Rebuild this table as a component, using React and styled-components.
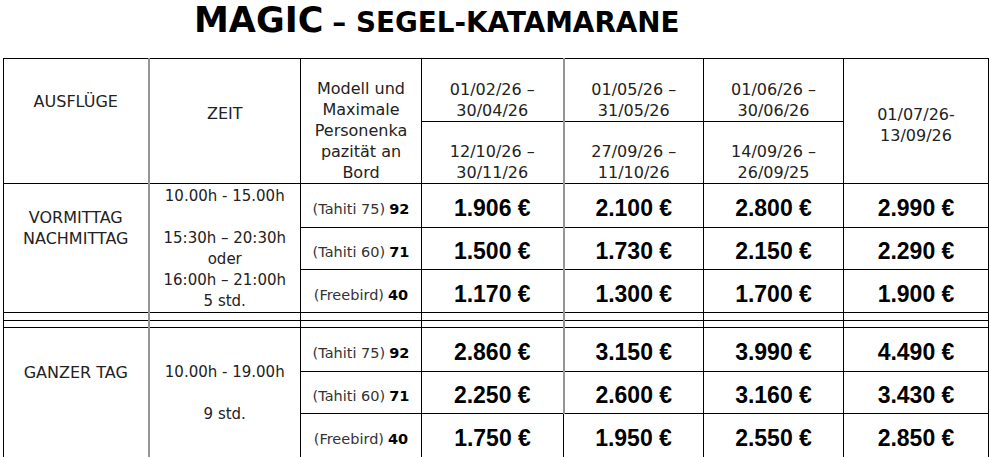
import React from "react";
import styled, { createGlobalStyle } from "styled-components";

const GlobalStyle = createGlobalStyle`
  html, body { margin: 0; padding: 0; overflow: hidden; background: #fff; }
  body { font-family: "DejaVu Sans", "Noto Sans", sans-serif; color: #222; }
`;

const Page = styled.div`
  padding-left: 3px;
`;

const Title = styled.h1`
  margin: 0;
  height: 58px;
  box-sizing: border-box;
  padding: 3px 0 0 191px;
  display: flex;
  align-items: baseline;
  gap: 9px;
  font-family: "DejaVu Sans", sans-serif;
  font-weight: bold;
  line-height: 35px;
  color: #000;
`;

const TitleBig = styled.span`
  font-size: 35px;
`;

const TitleSmall = styled.span`
  font-size: 27.8px;
`;

const Table = styled.table`
  border-collapse: collapse;
  table-layout: fixed;
  width: 986px;
`;

const Col = styled.col`
  width: ${(p) => p.$w}px;
`;

const GRAY = "2px solid #959595";

const Cell = styled.td`
  border: 1px solid #000;
  ${(p) => (p.$grayRight ? `border-right: ${GRAY};` : "")}
  ${(p) => (p.$grayLeft ? `border-left: ${GRAY};` : "")}
  padding: ${(p) => p.$pt || 0}px 0 0 0;
  height: ${(p) => p.$h}px;
  text-align: center;
  vertical-align: ${(p) => p.$va || "middle"};
  line-height: 21px;
  white-space: nowrap;
  box-sizing: border-box;
`;

const HeadText = styled.div`
  font-size: 16px;
  color: #222;
`;

const LabelText = styled.div`
  font-size: 16px;
  color: #222;
`;

const TimeText = styled.div`
  font-size: 15px;
  color: #222;
`;

const ModelName = styled.span`
  font-size: 14.5px;
  color: #333;
`;

const ModelPax = styled.span`
  font-size: 14.5px;
  font-weight: bold;
  color: #000;
  margin-left: 4px;
`;

const Price = styled.div`
  font-family: "Liberation Sans", Arial, sans-serif;
  font-weight: bold;
  font-size: 23px;
  color: #000;
  line-height: 24px;
`;

const widths = [145, 152, 121, 142, 140, 140, 145];

const blocks = [
  {
    label: ["VORMITTAG", "NACHMITTAG"],
    labelPt: 23,
    times: ["10.00h - 15.00h", "", "15:30h – 20:30h", "oder", "16:00h – 21:00h", "5 std."],
    timePt: 2,
    rows: [
      { model: "(Tahiti 75)", pax: "92", prices: ["1.906 €", "2.100 €", "2.800 €", "2.990 €"], h: 44 },
      { model: "(Tahiti 60)", pax: "71", prices: ["1.500 €", "1.730 €", "2.150 €", "2.290 €"], h: 42 },
      { model: "(Freebird)", pax: "40", prices: ["1.170 €", "1.300 €", "1.700 €", "1.900 €"], h: 43 },
    ],
  },
  {
    label: ["GANZER TAG"],
    labelPt: 34,
    times: ["10.00h - 19.00h", "", "9 std."],
    timePt: 34,
    rows: [
      { model: "(Tahiti 75)", pax: "92", prices: ["2.860 €", "3.150 €", "3.990 €", "4.490 €"], h: 44 },
      { model: "(Tahiti 60)", pax: "71", prices: ["2.250 €", "2.600 €", "3.160 €", "3.430 €"], h: 42 },
      { model: "(Freebird)", pax: "40", prices: ["1.750 €", "1.950 €", "2.550 €", "2.850 €"], h: 44, last: true },
    ],
  },
];

const lines = (arr) =>
  arr.map((t, i) => (
    <React.Fragment key={i}>
      {i > 0 && <br />}
      {t || "\u00a0"}
    </React.Fragment>
  ));

function Block({ block }) {
  return block.rows.map((r, i) => (
    <tr key={i}>
      {i === 0 && (
        <>
          <Cell rowSpan={3} $va="top" $pt={block.labelPt} $grayRight>
            <LabelText>{lines(block.label)}</LabelText>
          </Cell>
          <Cell rowSpan={3} $va="top" $pt={block.timePt} $grayLeft>
            <TimeText>{lines(block.times)}</TimeText>
          </Cell>
        </>
      )}
      <Cell $h={r.h} $pt={7}>
        <ModelName>{r.model}</ModelName>
        <ModelPax>{r.pax}</ModelPax>
      </Cell>
      {r.prices.map((p, j) => (
        <Cell
          key={j}
          $h={r.h}
          $pt={5}
          $grayRight={j === 0 && !r.last}
          $grayLeft={j === 1 && !r.last}
        >
          <Price>{p}</Price>
        </Cell>
      ))}
    </tr>
  ));
}

function Spacer({ h }) {
  return (
    <tr>
      {widths.map((_, i) => (
        <Cell key={i} $h={h} $grayRight={i === 0 || i === 3} $grayLeft={i === 1 || i === 4} />
      ))}
    </tr>
  );
}

export default function App() {
  return (
    <Page>
      <GlobalStyle />
      <Title>
        <TitleBig>MAGIC</TitleBig>
        <TitleSmall>– SEGEL-KATAMARANE</TitleSmall>
      </Title>
      <Table>
        <colgroup>
          {widths.map((w, i) => (
            <Col key={i} $w={w} />
          ))}
        </colgroup>
        <tbody>
          <tr>
            <Cell rowSpan={2} $va="top" $pt={32} $grayRight>
              <HeadText>AUSFLÜGE</HeadText>
            </Cell>
            <Cell rowSpan={2} $va="top" $pt={44} $grayLeft>
              <HeadText>ZEIT</HeadText>
            </Cell>
            <Cell rowSpan={2} $va="bottom">
              <HeadText>{lines(["Modell und", "Maximale", "Personenka", "pazität an", "Bord"])}</HeadText>
            </Cell>
            <Cell $h={63} $va="bottom" $grayRight>
              <HeadText>{lines(["01/02/26 –", "30/04/26"])}</HeadText>
            </Cell>
            <Cell $h={63} $va="bottom" $grayLeft>
              <HeadText>{lines(["01/05/26 –", "31/05/26"])}</HeadText>
            </Cell>
            <Cell $h={63} $va="bottom">
              <HeadText>{lines(["01/06/26 –", "30/06/26"])}</HeadText>
            </Cell>
            <Cell rowSpan={2} $pt={7}>
              <HeadText>{lines(["01/07/26-", "13/09/26"])}</HeadText>
            </Cell>
          </tr>
          <tr>
            <Cell $h={62} $va="bottom" $grayRight>
              <HeadText>{lines(["12/10/26 –", "30/11/26"])}</HeadText>
            </Cell>
            <Cell $h={62} $va="bottom" $grayLeft>
              <HeadText>{lines(["27/09/26 –", "11/10/26"])}</HeadText>
            </Cell>
            <Cell $h={62} $va="bottom">
              <HeadText>{lines(["14/09/26 –", "26/09/25"])}</HeadText>
            </Cell>
          </tr>
          <Block block={blocks[0]} />
          <Spacer h={8} />
          <Spacer h={7} />
          <Block block={blocks[1]} />
        </tbody>
      </Table>
    </Page>
  );
}
